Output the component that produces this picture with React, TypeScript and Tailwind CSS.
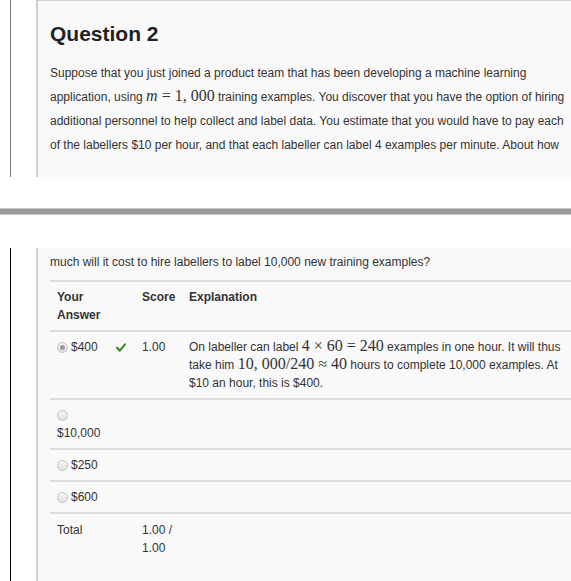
import React from "react";

const serif = "font-['Liberation_Serif',serif] text-[16px] leading-[0]";

function Radio({ checked = false }: { checked?: boolean }) {
  return (
    <span className="inline-flex h-[11px] w-[11px] shrink-0 items-center justify-center rounded-full border border-[#c4c4c4] bg-gradient-to-b from-[#f4f4f4] to-[#e2e2e2] align-[-1px]">
      {checked && <span className="h-[5px] w-[5px] rounded-full bg-[#9a9a9a]" />}
    </span>
  );
}

function Check() {
  return (
    <svg width="10" height="9" viewBox="0 0 10 9" className="inline-block">
      <path d="M1 4.8 L3.8 7.6 L9 1.4" fill="none" stroke="#3b8a2b" strokeWidth="2.2" strokeLinecap="round" strokeLinejoin="round" />
    </svg>
  );
}

const rows = [
  { label: "$250" },
  { label: "$600" },
];

export default function App() {
  return (
    <div className="flex h-[581px] w-[571px] flex-col overflow-hidden bg-white font-['Liberation_Sans',Arial,sans-serif] text-[#333]">
      {/* Top part of the question */}
      <div className="flex h-[177px] shrink-0">
        <div className="ml-[10px] w-[26px] shrink-0 border-l border-[#7a7a7a]" />
        <div className="w-[600px] shrink-0 border-l-2 border-t border-[#cfcfcf] bg-[#f9f9f9] pl-3">
          <h2 className="mt-[21px] text-[21px] font-bold leading-[24px] text-[#222]">Question 2</h2>
          <p className="mt-[15px] w-[518px] text-[12px] leading-[24px]">
            Suppose that you just joined a product team that has been developing a machine learning application, using{" "}
            <span className={serif}>
              <i>m</i> = 1, 000
            </span>{" "}
            training examples. You discover that you have the option of hiring additional personnel to help collect and label data. You estimate that you would have to pay each of the labellers $10 per hour, and that each labeller can label 4 examples per minute. About how
          </p>
        </div>
      </div>

      {/* Separator bar */}
      <div className="mt-[31px] h-[7px] shrink-0 border-y border-[#c6c6c6] bg-[#9b9b9b]" />

      {/* Continued question */}
      <div className="mt-[33px] flex flex-1">
        <div className="ml-[10px] w-[26px] shrink-0 border-l border-black" />
        <div className="w-[600px] shrink-0 border-l-2 border-[#cfcfcf] bg-[#f9f9f9] pl-3 pt-[2px]">
          <p className="text-[12px] leading-[24px]">much will it cost to hire labellers to label 10,000 new training examples?</p>

          <div className="mt-[6px] w-[550px] text-[12px] leading-[18px]">
            <div className="grid grid-cols-[92px_47px_376px] border-t-2 border-[#dcdcdc] py-[6px] font-bold">
              <div className="w-[60px] pl-[7px]">Your Answer</div>
              <div>Score</div>
              <div>Explanation</div>
            </div>

            <div className="grid grid-cols-[92px_47px_376px] border-t-2 border-[#dcdcdc] py-[6px]">
              <div className="flex items-start pl-[7px]">
                <span className="flex h-[18px] items-center gap-[3px]">
                  <Radio checked />
                  <span>$400</span>
                </span>
                <span className="ml-[18px] flex h-[18px] items-center">
                  <Check />
                </span>
              </div>
              <div>1.00</div>
              <div>
                On labeller can label <span className={serif}>4 × 60 = 240</span> examples in one hour. It will thus take him{" "}
                <span className={serif}>10, 000/240 ≈ 40</span> hours to complete 10,000 examples. At $10 an hour, this is $400.
              </div>
            </div>

            <div className="grid grid-cols-[92px_47px_376px] border-t-2 border-[#dcdcdc] py-[6px]">
              <div className="flex flex-col pl-[7px]">
                <span className="flex h-[18px] items-center">
                  <Radio />
                </span>
                <span>$10,000</span>
              </div>
              <div />
              <div />
            </div>

            {rows.map((r) => (
              <div key={r.label} className="grid grid-cols-[92px_47px_376px] border-t-2 border-[#dcdcdc] py-[6px]">
                <div className="flex h-[18px] items-center gap-[3px] pl-[7px]">
                  <Radio />
                  <span>{r.label}</span>
                </div>
                <div />
                <div />
              </div>
            ))}

            <div className="grid grid-cols-[92px_47px_376px] border-t-2 border-[#dcdcdc] py-[7px]">
              <div className="pl-[7px]">Total</div>
              <div>1.00 / 1.00</div>
              <div />
            </div>
          </div>
        </div>
      </div>
    </div>
  );
}
